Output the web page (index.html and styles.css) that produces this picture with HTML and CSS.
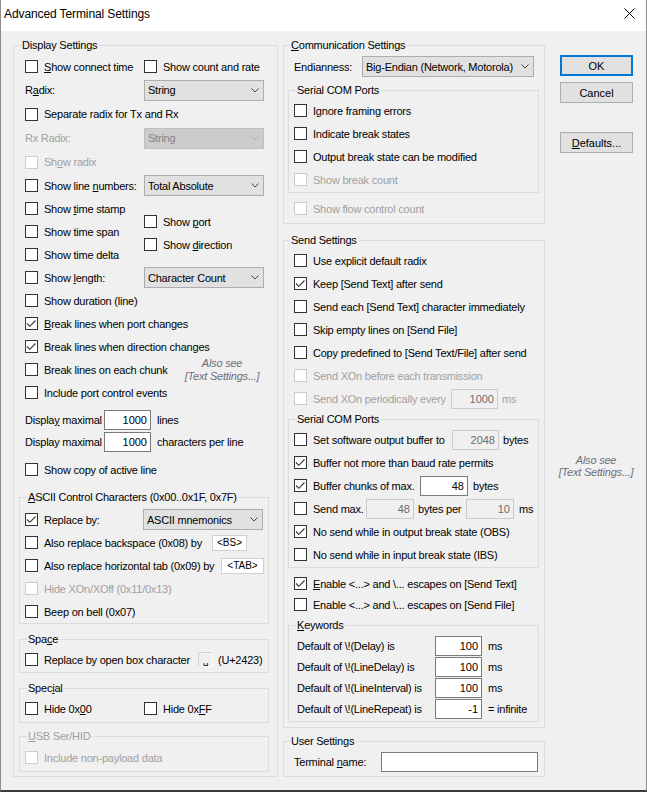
FILE: index.html
```html
<!DOCTYPE html>
<html>
<head>
<meta charset="utf-8">
<title>Advanced Terminal Settings</title>
<link rel="stylesheet" href="styles.css">
</head>
<body>
<div class="window">
  <div class="titlebar">
    <span class="title">Advanced Terminal Settings</span>
    <span class="close"><svg width="11" height="11" viewBox="0 0 11 11"><path d="M0.5 0.5 L10.5 10.5 M10.5 0.5 L0.5 10.5" stroke="#000" stroke-width="1" fill="none"/></svg></span>
  </div>
  <div class="content">
    <!-- LEFT COLUMN -->
    <div class="col col-left">
      <fieldset class="group outer left-outer">
        <legend>Display Settings</legend>
        <div class="row r23 first">
          <label class="chk lead119"><span class="cb"></span><span><u>S</u>how connect time</span></label>
          <label class="chk"><span class="cb"></span><span>Show count and rate</span></label>
        </div>
        <div class="row r24">
          <span class="lead119">R<u>a</u>dix:</span>
          <span class="combo w120"><span>String</span><svg class="chev" width="8" height="5" viewBox="0 0 8 5"><path d="M0.5 0.5 L4 4 L7.5 0.5" fill="none" stroke="#444"/></svg></span>
        </div>
        <div class="row r24">
          <label class="chk"><span class="cb"></span><span>Separate radix for Tx and Rx</span></label>
        </div>
        <div class="row r24 dis">
          <span class="lead119">Rx Radix:</span>
          <span class="combo w120 off"><span>String</span><svg class="chev" width="8" height="5" viewBox="0 0 8 5"><path d="M0.5 0.5 L4 4 L7.5 0.5" fill="none" stroke="#b0b0b0"/></svg></span>
        </div>
        <div class="row r24 dis">
          <label class="chk"><span class="cb"></span><span>Sh<u>o</u>w radix</span></label>
        </div>
        <div class="row r23">
          <label class="chk lead119"><span class="cb"></span><span>Show line <u>n</u>umbers:</span></label>
          <span class="combo w120"><span>Total Absolute</span><svg class="chev" width="8" height="5" viewBox="0 0 8 5"><path d="M0.5 0.5 L4 4 L7.5 0.5" fill="none" stroke="#444"/></svg></span>
        </div>
        <div class="tgroup">
          <div class="tcol lead119">
            <div class="row r23"><label class="chk"><span class="cb"></span><span>Show <u>t</u>ime stamp</span></label></div>
            <div class="row r23"><label class="chk"><span class="cb"></span><span>Show time span</span></label></div>
            <div class="row r23"><label class="chk"><span class="cb"></span><span>Show time delta</span></label></div>
          </div>
          <div class="tcol shift">
            <div class="row r23"><label class="chk"><span class="cb"></span><span>Show <u>p</u>ort</span></label></div>
            <div class="row r23"><label class="chk"><span class="cb"></span><span>Show <u>d</u>irection</span></label></div>
          </div>
        </div>
        <div class="row r23">
          <label class="chk lead119"><span class="cb"></span><span>Show <u>l</u>ength:</span></label>
          <span class="combo w120"><span>Character Count</span><svg class="chev" width="8" height="5" viewBox="0 0 8 5"><path d="M0.5 0.5 L4 4 L7.5 0.5" fill="none" stroke="#444"/></svg></span>
        </div>
        <div class="row r23"><label class="chk"><span class="cb"></span><span>Show duration (line)</span></label></div>
        <div class="row r23"><label class="chk"><span class="cb on"><svg width="11" height="11" viewBox="0 0 11 11"><path d="M1 5.5 L3.8 8.3 L9.5 2.5" fill="none" stroke="#333" stroke-width="1.1"/></svg></span><span><u>B</u>reak lines when port changes</span></label></div>
        <div class="row r23"><label class="chk"><span class="cb on"><svg width="11" height="11" viewBox="0 0 11 11"><path d="M1 5.5 L3.8 8.3 L9.5 2.5" fill="none" stroke="#333" stroke-width="1.1"/></svg></span><span>Break lines when direction changes</span></label></div>
        <div class="row r23">
          <label class="chk"><span class="cb"></span><span>Break lines on each chunk</span></label>
          <span class="note note-left">Also see<br>[Text Settings...]</span>
        </div>
        <div class="row r23"><label class="chk"><span class="cb"></span><span>Include port control events</span></label></div>
        <div class="row r22 gap5">
          <span class="lead79">Displa<u>y</u> maximal</span>
          <span class="num w47">1000</span>
          <span class="unit6">lines</span>
        </div>
        <div class="row r22">
          <span class="lead79">Display maximal</span>
          <span class="num w47">1000</span>
          <span class="unit6">characters per line</span>
        </div>
        <div class="row r23 gap5"><label class="chk"><span class="cb"></span><span>Show copy of active line</span></label></div>

        <fieldset class="group inner g-ascii">
          <legend><u>A</u>SCII Control Characters (0x00..0x1F, 0x7F)</legend>
          <div class="row r23">
            <label class="chk lead118"><span class="cb on"><svg width="11" height="11" viewBox="0 0 11 11"><path d="M1 5.5 L3.8 8.3 L9.5 2.5" fill="none" stroke="#333" stroke-width="1.1"/></svg></span><span>Replace by:</span></label>
            <span class="combo w120"><span>ASCII mnemonics</span><svg class="chev" width="8" height="5" viewBox="0 0 8 5"><path d="M0.5 0.5 L4 4 L7.5 0.5" fill="none" stroke="#444"/></svg></span>
          </div>
          <div class="row r23">
            <label class="chk lead187"><span class="cb"></span><span>Also replace backspace (0x08) by</span></label>
            <span class="tag w35">&lt;BS&gt;</span>
          </div>
          <div class="row r23">
            <label class="chk lead196"><span class="cb"></span><span>Also replace horizontal tab (0x09) by</span></label>
            <span class="tag w43">&lt;TAB&gt;</span>
          </div>
          <div class="row r23 dis"><label class="chk"><span class="cb"></span><span>Hide XOn/XOff (0x11/0x13)</span></label></div>
          <div class="row r23"><label class="chk"><span class="cb"></span><span>Beep on bell (0x07)</span></label></div>
        </fieldset>

        <fieldset class="group inner g-space">
          <legend>Spa<u>c</u>e</legend>
          <div class="row r23">
            <label class="chk lead173"><span class="cb"></span><span>Replace by open box character</span></label>
            <span class="obox">␣</span>
            <span class="unit5">(U+2423)</span>
          </div>
        </fieldset>

        <fieldset class="group inner g-special">
          <legend>Spec<u>i</u>al</legend>
          <div class="row r23">
            <label class="chk lead119"><span class="cb"></span><span>Hide 0x<u>0</u>0</span></label>
            <label class="chk"><span class="cb"></span><span>Hide 0x<u>F</u>F</span></label>
          </div>
        </fieldset>

        <fieldset class="group inner g-usb dis">
          <legend><u>U</u>SB Ser/HID</legend>
          <div class="row r23"><label class="chk"><span class="cb"></span><span>Include non-payload data</span></label></div>
        </fieldset>
      </fieldset>
    </div>

    <!-- MIDDLE COLUMN -->
    <div class="col col-mid">
      <fieldset class="group outer mid-outer g-comm">
        <legend><u>C</u>ommunication Settings</legend>
        <div class="row r23 first">
          <span class="lead68">Endianness:</span>
          <span class="combo w172"><span>Big-Endian (Network, Motorola)</span><svg class="chev" width="8" height="5" viewBox="0 0 8 5"><path d="M0.5 0.5 L4 4 L7.5 0.5" fill="none" stroke="#444"/></svg></span>
        </div>
        <fieldset class="group inner g-serial1">
          <legend>Serial COM Ports</legend>
          <div class="row r23"><label class="chk"><span class="cb"></span><span>Ignore framing errors</span></label></div>
          <div class="row r23"><label class="chk"><span class="cb"></span><span>Indicate break states</span></label></div>
          <div class="row r23"><label class="chk"><span class="cb"></span><span>Output break state can be modified</span></label></div>
          <div class="row r23 dis"><label class="chk"><span class="cb"></span><span>Show break count</span></label></div>
        </fieldset>
        <div class="row r23 gap4 dis"><label class="chk"><span class="cb"></span><span>Show flow control count</span></label></div>
      </fieldset>

      <fieldset class="group outer mid-outer g-send">
        <legend>Send Settings</legend>
        <div class="row r23 first"><label class="chk"><span class="cb"></span><span>Use explicit default radix</span></label></div>
        <div class="row r23"><label class="chk"><span class="cb on"><svg width="11" height="11" viewBox="0 0 11 11"><path d="M1 5.5 L3.8 8.3 L9.5 2.5" fill="none" stroke="#333" stroke-width="1.1"/></svg></span><span>Keep [Send Text] after send</span></label></div>
        <div class="row r23"><label class="chk"><span class="cb"></span><span>Send each [Send Text] character immediately</span></label></div>
        <div class="row r23"><label class="chk"><span class="cb"></span><span>Skip empty lines on [Send File]</span></label></div>
        <div class="row r23"><label class="chk"><span class="cb"></span><span>Copy predefined to [Send Text/File] after send</span></label></div>
        <div class="row r23 dis"><label class="chk"><span class="cb"></span><span>Send XOn before each transmission</span></label></div>
        <div class="row r23 dis">
          <label class="chk lead157"><span class="cb"></span><span>Send XOn periodically every</span></label>
          <span class="num w47 off">1000</span>
          <span class="unit4">ms</span>
        </div>

        <fieldset class="group inner g-serial2">
          <legend>Serial COM Ports</legend>
          <div class="row r23">
            <label class="chk lead158"><span class="cb"></span><span>Set software output buffer to</span></label>
            <span class="num w47 off">2048</span>
            <span class="unit4">bytes</span>
          </div>
          <div class="row r23"><label class="chk"><span class="cb on"><svg width="11" height="11" viewBox="0 0 11 11"><path d="M1 5.5 L3.8 8.3 L9.5 2.5" fill="none" stroke="#333" stroke-width="1.1"/></svg></span><span>Buffer not more than baud rate permits</span></label></div>
          <div class="row r23">
            <label class="chk lead126"><span class="cb on"><svg width="11" height="11" viewBox="0 0 11 11"><path d="M1 5.5 L3.8 8.3 L9.5 2.5" fill="none" stroke="#333" stroke-width="1.1"/></svg></span><span>Buffer chunks of max.</span></label>
            <span class="num w48">48</span>
            <span class="unit5">bytes</span>
          </div>
          <div class="row r23">
            <label class="chk lead72"><span class="cb"></span><span>Send max.</span></label>
            <span class="num w48 off">48</span>
            <span class="unit4 lead48">bytes per</span>
            <span class="num w48 off">10</span>
            <span class="unit5">ms</span>
          </div>
          <div class="row r23"><label class="chk"><span class="cb on"><svg width="11" height="11" viewBox="0 0 11 11"><path d="M1 5.5 L3.8 8.3 L9.5 2.5" fill="none" stroke="#333" stroke-width="1.1"/></svg></span><span>No send while in output break state (OBS)</span></label></div>
          <div class="row r23"><label class="chk"><span class="cb"></span><span>No send while in input break state (IBS)</span></label></div>
        </fieldset>

        <div class="row r21 gap5"><label class="chk"><span class="cb on"><svg width="11" height="11" viewBox="0 0 11 11"><path d="M1 5.5 L3.8 8.3 L9.5 2.5" fill="none" stroke="#333" stroke-width="1.1"/></svg></span><span><u>E</u>nable &lt;...&gt; and \... escapes on [Send Text]</span></label></div>
        <div class="row r21"><label class="chk"><span class="cb"></span><span>Enable &lt;...&gt; and \... escapes on [Send File]</span></label></div>

        <fieldset class="group inner g-keywords">
          <legend><u>K</u>eywords</legend>
          <div class="row r21 kw">
            <span class="lead138">Default of \!(Delay) is</span>
            <span class="num w47">100</span>
            <span class="unit6">ms</span>
          </div>
          <div class="row r21 kw">
            <span class="lead138">Default of \!(LineDelay) is</span>
            <span class="num w47">100</span>
            <span class="unit6">ms</span>
          </div>
          <div class="row r21 kw">
            <span class="lead138">Default of \!(LineInterval) is</span>
            <span class="num w47">100</span>
            <span class="unit6">ms</span>
          </div>
          <div class="row r21 kw">
            <span class="lead138">Default of \!(LineRepeat) is</span>
            <span class="num w47">-1</span>
            <span class="unit6">= infinite</span>
          </div>
        </fieldset>
      </fieldset>

      <fieldset class="group outer mid-outer g-user">
        <legend>User Settings</legend>
        <div class="row r23 first">
          <span class="lead87">Terminal <u>n</u>ame:</span>
          <span class="num w157"></span>
        </div>
      </fieldset>
    </div>

    <!-- RIGHT COLUMN -->
    <div class="col col-right">
      <div class="btn default">OK</div>
      <div class="btn cancel">Cancel</div>
      <div class="btn defaults"><span><u>D</u>efaults...</span></div>
      <div class="note note-right">Also see<br>[Text Settings...]</div>
    </div>
  </div>
</div>
</body>
</html>
```

FILE: styles.css
```css
* { box-sizing: border-box; }

html, body {
  margin: 0;
  padding: 0;
}

body {
  width: 647px;
  height: 792px;
  overflow: hidden;
  font-family: "Liberation Sans", Arial, sans-serif;
  font-size: 11px;
  letter-spacing: -0.22px;
  color: #000;
  background: #f0f0f0;
}

u {
  text-decoration: underline;
  text-decoration-thickness: 1px;
  text-underline-offset: 1px;
}

.window {
  position: relative;
  width: 647px;
  height: 792px;
  background: #f0f0f0;
  display: flex;
  flex-direction: column;
}

/* thin window frame drawn over the edges */
.window::after {
  content: "";
  position: absolute;
  inset: 0;
  border-left: 1px solid #8c8c8c;
  border-right: 1px solid #8c8c8c;
  border-bottom: 2px solid #3a3a3a;
  pointer-events: none;
}

.titlebar {
  height: 31px;
  flex: none;
  background: #fff;
  display: flex;
  align-items: center;
  justify-content: space-between;
  padding: 0 12px 4px 4px;
}

.title {
  font-family: "Liberation Sans", Arial, sans-serif;
  font-size: 12px;
  letter-spacing: -0.1px;
}

.close {
  display: flex;
  align-items: center;
}

.content {
  display: grid;
  grid-template-columns: 265px 262px 97px;
  column-gap: 5px;
  padding: 7px 0 0 13px;
  align-items: start;
}

.col { display: flex; flex-direction: column; }

/* ---------- group boxes ---------- */
.group {
  margin: 0;
  min-width: 0;
  border: 1px solid #dcdcdc;
  padding: 0 5px 0 5px;
}

.group legend {
  padding: 0 1px;
  margin-left: 2px;
  line-height: 14px;
  height: 14px;
}

.left-outer { padding: 0 8px 4px 5px; }
.mid-outer { padding: 0 5px 0 4px; }

.outer > .row, .outer > .tgroup { margin-left: 6px; }
.outer > .row.first { margin-top: 3px; }

.inner { padding: 0 5px 0 5px; }

.g-ascii { margin-top: 9px; padding-top: 4px; }
.g-space { margin-top: 8px; padding-top: 2px; padding-bottom: 1px; }
.g-special { margin-top: 8px; padding-top: 2px; padding-bottom: 2px; }
.g-usb { margin-top: 6px; padding-top: 3px; padding-bottom: 2px; }

.g-comm { padding-bottom: 3px; }
.g-serial1 { margin-top: 5px; padding-top: 2px; padding-bottom: 1px; }
.g-send { margin-top: 9px; padding-bottom: 5px; }
.g-send > .row.first { margin-top: 2px; }
.g-serial2 { margin-top: 2px; padding-top: 2px; padding-bottom: 1px; }
.g-keywords { margin-top: 3px; padding-top: 3px; padding-bottom: 2px; }
.g-user { margin-top: 6px; padding-bottom: 3px; }
.g-user > .row.first { margin-top: 2px; }

/* ---------- rows ---------- */
.row {
  display: flex;
  align-items: center;
  white-space: nowrap;
}
.r21 { height: 21px; }
.r22 { height: 22px; }
.r23 { height: 23px; }
.r24 { height: 24px; }
.gap4 { margin-top: 4px; }
.gap5 { margin-top: 5px; }

.kw { margin-left: 3px; }

.tgroup { display: flex; }
.tcol { display: flex; flex-direction: column; }
.tcol.shift { padding-top: 13px; }

.lead48 { width: 48px; flex: none; }
.lead68 { width: 68px; flex: none; }
.lead72 { width: 72px; flex: none; }
.lead79 { width: 79px; flex: none; }
.lead87 { width: 87px; flex: none; }
.lead118 { width: 118px; flex: none; }
.lead119 { width: 119px; flex: none; }
.lead126 { width: 126px; flex: none; }
.lead138 { width: 138px; flex: none; }
.lead157 { width: 157px; flex: none; }
.lead158 { width: 158px; flex: none; }
.lead173 { width: 173px; flex: none; }
.lead187 { width: 187px; flex: none; }
.lead196 { width: 196px; flex: none; }

.unit4 { margin-left: 4px; }
.unit5 { margin-left: 5px; }
.unit6 { margin-left: 6px; }

/* ---------- checkbox ---------- */
.chk {
  display: flex;
  align-items: center;
  white-space: nowrap;
}
.cb {
  width: 13px;
  height: 13px;
  flex: none;
  border: 1px solid #333;
  background: #fff;
  margin-right: 6px;
  display: flex;
}
.cb svg { display: block; }

.dis { color: #a0a0a0; }
.dis .cb { border-color: #cccccc; background: #fff; }

/* ---------- combo ---------- */
.combo {
  height: 21px;
  flex: none;
  border: 1px solid #adadad;
  background: #e1e1e1;
  display: flex;
  align-items: center;
  justify-content: space-between;
  padding: 0 4px 0 3px;
  color: #000;
}
.combo.off {
  background: #cccccc;
  border-color: #bfbfbf;
  color: #838383;
}
.chev { flex: none; }
.w120 { width: 120px; }
.w172 { width: 172px; }

/* ---------- numeric / text boxes ---------- */
.num {
  height: 20px;
  flex: none;
  border: 1px solid #7a7a7a;
  background: #fff;
  display: flex;
  align-items: center;
  justify-content: flex-end;
  padding-right: 3px;
  font-size: 11px;
  letter-spacing: 0;
  color: #000;
}
.num.off {
  background: #f0f0f0;
  border-color: #cccccc;
  color: #6d6d6d;
}
.w47 { width: 47px; }
.w48 { width: 48px; }
.w157 { width: 157px; }

.tag {
  height: 16px;
  flex: none;
  border: 1px solid #d0d0d0;
  background: #fff;
  display: flex;
  align-items: center;
  justify-content: center;
  font-size: 10px;
  letter-spacing: 0;
}
.w35 { width: 35px; }
.w43 { width: 43px; }

.obox {
  width: 15px;
  height: 15px;
  flex: none;
  border: 1px solid #d0d0d0;
  border-right-color: #fff;
  border-bottom-color: #fff;
  background: #f0f0f0;
  display: flex;
  align-items: flex-end;
  justify-content: center;
  font-family: "DejaVu Sans", sans-serif;
  font-size: 9px;
  line-height: 9px;
}

/* ---------- notes ---------- */
.note {
  font-style: italic;
  color: #6f6f78;
  text-align: center;
  line-height: 13px;
}
.note-left {
  width: 90px;
  margin-left: auto;
  margin-right: 2px;
}
.note-right {
  margin-top: 301px;
  margin-right: 5px;
  line-height: 12px;
}

/* ---------- buttons ---------- */
.btn {
  width: 73px;
  height: 21px;
  margin-left: 10px;
  border: 1px solid #adadad;
  background: #e1e1e1;
  display: flex;
  align-items: center;
  justify-content: center;
  font-size: 11px;
  letter-spacing: 0;
}
.btn.default {
  margin-top: 17px;
  border: 2px solid #0078d7;
}
.btn.cancel { margin-top: 6px; }
.btn.defaults { margin-top: 29px; }
```
